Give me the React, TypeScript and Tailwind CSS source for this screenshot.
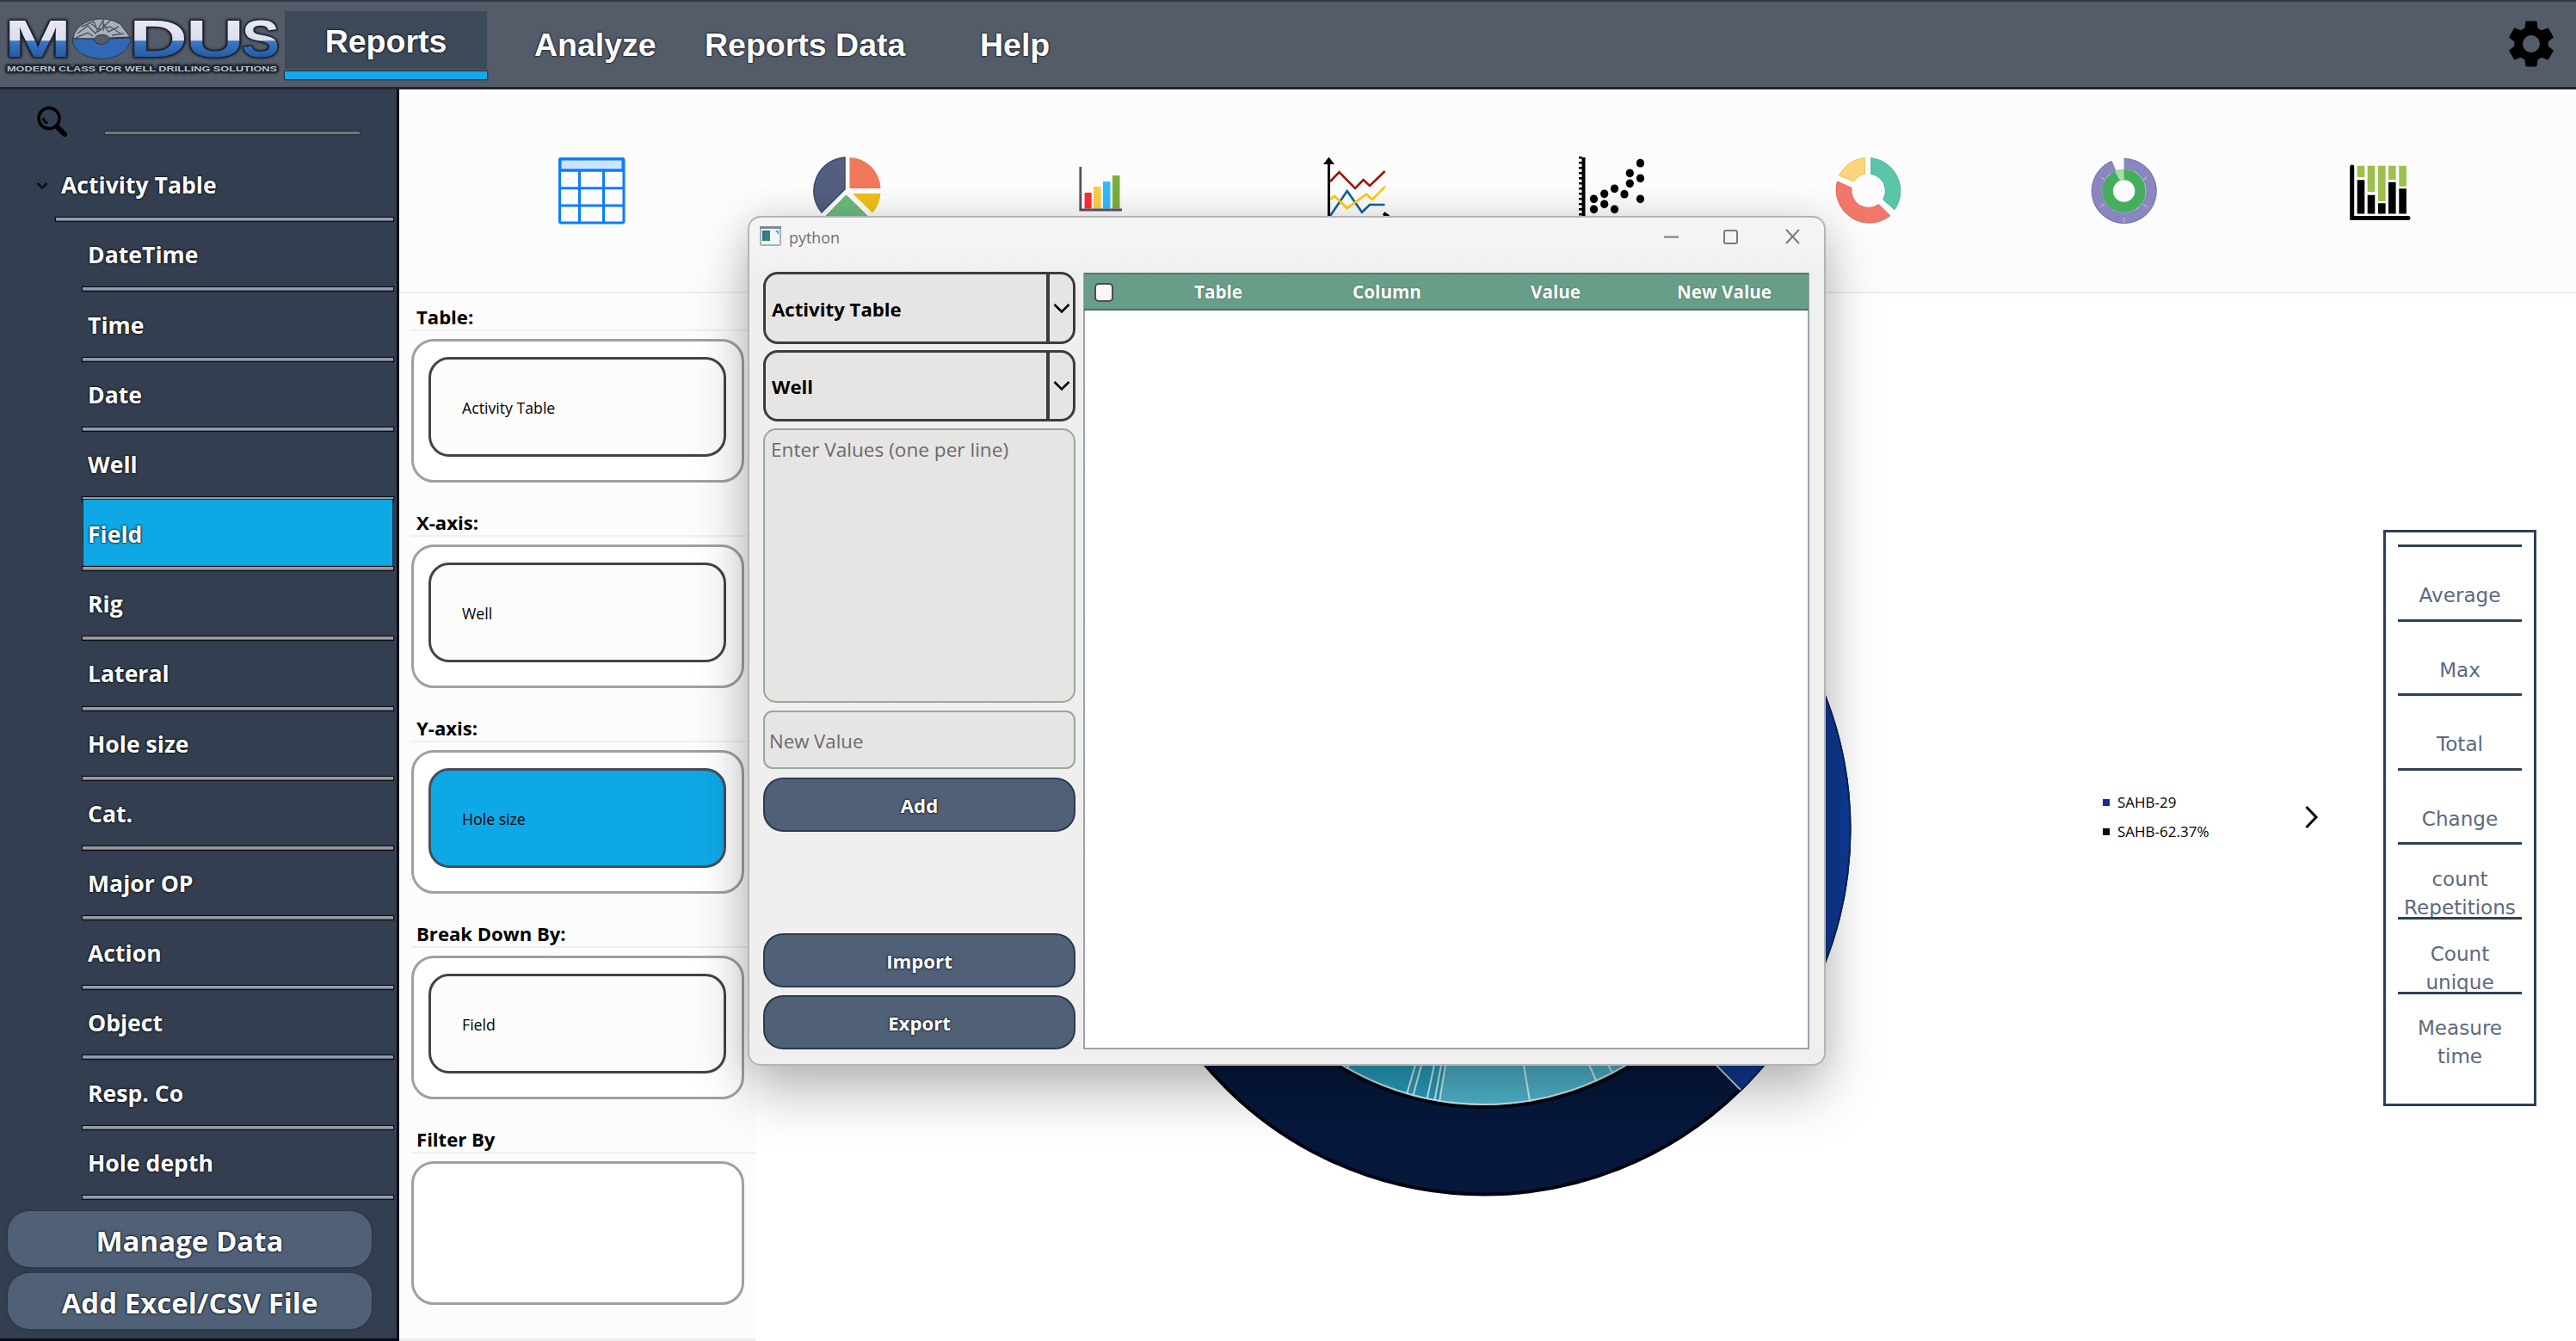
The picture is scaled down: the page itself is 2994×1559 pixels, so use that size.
import { MdSettings } from "react-icons/md";

const FIELDS = [
  "DateTime", "Time", "Date", "Well", "Field", "Rig", "Lateral", "Hole size",
  "Cat.", "Major OP", "Action", "Object", "Resp. Co", "Hole depth",
];

const SLOTS = [
  { label: "Table:", value: "Activity Table" },
  { label: "X-axis:", value: "Well" },
  { label: "Y-axis:", value: "Hole size", active: true },
  { label: "Break Down By:", value: "Field" },
  { label: "Filter By" },
];

const STATS = ["Average", "Max", "Total", "Change", "count Repetitions", "Count unique", "Measure time"];

function Logo() {
  const letter = {
    fontFamily: "Liberation Sans, sans-serif",
    fontWeight: 700,
    fontSize: 61,
    fill: "url(#wave)",
    stroke: "#2c3540",
    strokeWidth: 1.5,
    paintOrder: "stroke",
    lengthAdjust: "spacingAndGlyphs" as const,
    y: 64,
  };
  return (
    <svg width="331" height="99" viewBox="0 0 331 99" className="shrink-0">
      <defs>
        <linearGradient id="wave" gradientUnits="userSpaceOnUse" x1="0" y1="20" x2="0" y2="66">
          <stop offset="0" stopColor="#e9e9f6" />
          <stop offset="0.54" stopColor="#dcdcee" />
          <stop offset="0.56" stopColor="#3b78c4" />
          <stop offset="1" stopColor="#2457a0" />
        </linearGradient>
      </defs>
      <text {...letter} x="5" textLength="78">M</text>
      <text {...letter} x="150" textLength="68">D</text>
      <text {...letter} x="216" textLength="68">U</text>
      <text {...letter} x="281" textLength="44">S</text>
      <path d="M85 43A33 24 0 0 1 140 26L151 41L127 42A9 6 0 0 0 110 43Z" fill="#a9b0ba" stroke="#2c3540" />
      <path
        d="M90 37l12-9 9 9 8-14 7 12 12-6M95 29l14-6 5 12 14-13M88 42l14-6 6 4M104 24l10 8 14-3 12 8M120 20v14M130 39l14-2"
        fill="none" stroke="#4e5866" strokeWidth="1.4"
      />
      <path d="M84 43H109A9 6.5 0 0 0 127 43L152 42A34 24 0 0 1 84 43Z" fill="#2f69b5" stroke="#2c3540" />
      <text
        x="8" y="81" textLength="314" lengthAdjust="spacingAndGlyphs" fontFamily="Liberation Sans, sans-serif"
        fontWeight="700" fontSize="9.5" fill="#bcc3d1" stroke="#2c3540" strokeWidth="2.5" paintOrder="stroke"
      >
        MODERN CLASS FOR WELL DRILLING SOLUTIONS
      </text>
    </svg>
  );
}

function TableIcon() {
  return (
    <svg width="80" height="80" fill="none" stroke="#0a7dff" strokeWidth="3">
      <path d="M3 3H76V16H3Z" fill="#cce4ff" />
      <rect x="2.5" y="2.5" width="74.5" height="74.5" rx="2" fill="none" />
      <path d="M2 16H77M2 36.7H77M2 57H77M25.5 16V77M53.5 16V77" />
    </svg>
  );
}

function PieIcon() {
  return (
    <svg width="80" height="80">
      <path d="M37 1V38L10 65A39 39 0 0 1 37 1Z" fill="#525f80" stroke="#3d4868" strokeWidth="1.5" />
      <path d="M42.5 1A37 37 0 0 1 78.5 37H42.5Z" fill="#f0785a" />
      <path d="M46 43H78.5A38 38 0 0 1 69 65.5Z" fill="#eec119" />
      <path d="M38.5 45L14 70A38 38 0 0 0 64 70Z" fill="#6cbb7e" stroke="#57a86b" />
    </svg>
  );
}

function BarsIcon() {
  return (
    <svg width="80" height="80" className="mr-[5px]">
      <path d="M21.6 42h8v18.500h-8z" fill="#fb2e36" />
      <path d="M32 35h8.500v25.500h-8.500z" fill="#ffcb45" />
      <path d="M43 29h8.500v31.500h-8.500z" fill="#30bdff" />
      <path d="M54 22h8.500v38.500h-8.500z" fill="#78ae39" />
      <path d="M16.800 12V62H65" fill="none" stroke="#575260" strokeWidth="2.800" />
    </svg>
  );
}

function LinesIcon() {
  return (
    <svg width="80" height="80" fill="none" strokeWidth="2.600" className="mr-[5px]">
      <path d="M10 69L29.700 40L47 64.700L56 56H73.500" stroke="#12609f" />
      <path d="M10 50L15 46L29.700 60L52 43.700L59 50L74 34.700" stroke="#ffc90a" />
      <path d="M10 29L20.500 18L39 37L48.600 27L56 34L73.600 17" stroke="#9c160c" />
      <path d="M8.500 6V70" stroke="#000" strokeWidth="3" />
      <path d="M8.500 0.500L15 9H2Z" fill="#000" />
      <path d="M72 66L78 70" stroke="#000" strokeWidth="4" />
    </svg>
  );
}

const DOTS = [
  [18.5, 49.3], [18.5, 61.3], [30.7, 43.3], [30.7, 55.3], [42.5, 37.3], [42.5, 61.3],
  [54, 43.7], [60.3, 19.3], [60.3, 31.3], [72.5, 7.7], [72.5, 25.3], [72.5, 49.3],
];

function ScatterIcon() {
  return (
    <svg width="80" height="80" className="mr-[3px]">
      <path d="M6.500 1V70" stroke="#000" strokeWidth="4" />
      <path d="M3 0V70" stroke="#000" strokeWidth="4" strokeDasharray="2.500 3.500" />
      {DOTS.map(([x, y]) => <ellipse key={`${x}-${y}`} cx={x} cy={y} rx="4.600" ry="4.900" />)}
    </svg>
  );
}

function DonutIcon() {
  return (
    <svg width="80" height="80" className="mr-[3px]">
      <path d="M43.700 1.700A38.500 38.500 0 0 1 71 61.700L57.700 50A20 20 0 0 0 43.700 20.300Z" fill="#5ac6a9" stroke="#45b396" />
      <path d="M65.700 68.700A38.500 38.500 0 0 1 4.400 29L21 36.300A20 20 0 0 0 52.400 55.700Z" fill="#f2776b" stroke="#e2655a" />
      <path d="M36.400 1.300V20A20 20 0 0 0 23.700 29L6.400 22A38 38 0 0 1 36.400 1.300Z" fill="#fbd57e" stroke="#efc25f" />
    </svg>
  );
}

function RingsIcon() {
  return (
    <svg width="80" height="80" fill="none" className="mr-[2px]">
      <path d="M39.600 8.500A31.500 31.500 0 1 1 28 10.800" stroke="#8986c0" strokeWidth="12.500" />
      <path d="M39.600 2.500A37.500 37.500 0 1 1 25 5.500" stroke="#706cae" strokeWidth="1" />
      <path d="M66 24L61 28M13 24L18 28M67 59L62 55M12 59L17 55M39.600 71V77" stroke="#b3b1da" strokeWidth="1.500" />
      <circle cx="39.600" cy="40" r="19" stroke="#45ae5c" strokeWidth="12.500" />
      <path d="M39.600 27V14.500A25.500 25.500 0 0 0 29 17.200L35 28Z" fill="#a9dca6" />
    </svg>
  );
}

function StackedIcon() {
  return (
    <svg width="80" height="80" className="mr-[2px]">
      <path d="M7.700 12V71.500H73" fill="none" stroke="#000" strokeWidth="5" strokeLinecap="round" />
      <path d="M13.700 10.700h8.600V24h-8.600zM25.700 10.700h8.600V41h-8.600zM38 10.700h8.600V52H38zM50 10.700h8.600V27H50zM62.300 10.700h8.600V34.700h-8.600z" fill="#9dbf4b" />
      <path d="M13.700 27.300h8.600V66.500h-8.600zM25.700 44.700h8.600V66.500h-8.600zM38 54.300h8.600V66.500H38zM50 29.700h8.600V66.500H50zM62.300 37.300h8.600V66.500h-8.600z" />
    </svg>
  );
}

function Header() {
  return (
    <header className="flex h-[104px] shrink-0 border-t-2 border-b-[3px] border-t-[#33383f] border-b-[#1e2530] bg-[#545c6a] font-['Liberation_Sans',sans-serif] text-[37.5px] font-bold text-white [text-shadow:0_0_3px_#10151d,0_0_2px_#10151d]">
      <Logo />
      <div className="flex w-[235px] shrink-0 flex-col pt-[11px]">
        <div className="flex h-[67px] items-center justify-center bg-[#3c4a5a] pt-[3px]">Reports</div>
        <div className="mt-[3px] h-[9px] rounded-[1px] bg-[#12aae8] shadow-[0_0_2px_1px_#1d2733]" />
      </div>
      <nav className="flex flex-1 items-center pt-[1px] pl-[55px]">
        <span className="w-[198px]">Analyze</span>
        <span className="w-[320px]">Reports Data</span>
        <span>Help</span>
      </nav>
      <MdSettings className="mt-[16px] mr-[19px] size-[66px] text-black" />
    </header>
  );
}

function Rule() {
  return <div className="h-[4px] border-b border-[#566b8c] bg-[#9b9b9c] shadow-[0_0_1px_1px_#0b111a]" />;
}

function Sidebar() {
  return (
    <aside className="flex w-[464px] shrink-0 flex-col border-r-[3px] border-b-[3px] border-[#050b16] bg-[#333f50] font-['Open_Sans',sans-serif] font-bold text-white [text-shadow:0_0_3px_#05090f,0_0_2px_#05090f]">
      <div className="flex h-[72px] shrink-0 pl-[42px]">
        <svg width="40" height="40" className="mt-[18px]" fill="none" stroke="#000" strokeLinecap="round">
          <circle cx="15" cy="15.500" r="12" strokeWidth="3.500" />
          <path d="M8.500 16a7 7 0 0 0 4 5" strokeWidth="2.500" />
          <path d="M24 25L33 34" strokeWidth="6" />
        </svg>
        <div className="mt-[49px] ml-[40px] h-[3px] w-[296px] bg-[#77746f] shadow-[0_0_2px_1px_#222d3c]" />
      </div>
      <div className="flex h-[81.2px] shrink-0 flex-col pr-[4px] pl-[65px] text-[26.6px]">
        <div className="relative flex flex-1 items-center pt-[3px] pl-[6px]">
          <svg width="14" height="10" className="absolute left-[-23px]" fill="none" stroke="#0a0f16" strokeWidth="2.500">
            <path d="M1.500 2L7 7.500L12.500 2" />
          </svg>
          Activity Table
        </div>
        <Rule />
      </div>
      {FIELDS.map((f) => (
        <div key={f} className="flex h-[81.2px] shrink-0 flex-col pr-[4px] pl-[96px] text-[26.6px]">
          <div className={f === "Field" ? "-mt-[2px] flex flex-1 items-center border border-[#13364f] bg-[#0fa8e6] pt-[4px] pl-[5px]" : "flex flex-1 items-center pt-[3px] pl-[6px]"}>
            {f}
          </div>
          <Rule />
        </div>
      ))}
      <div className="mt-[14.500px] flex flex-col gap-[7px] pl-[9px] text-[33px]">
        {["Manage Data", "Add Excel/CSV File"].map((t) => (
          <div key={t} className="flex h-[65px] w-[423px] items-center justify-center rounded-[25px] bg-[#506077] pt-[4px] shadow-[0_0_3px_1px_#2a3647]">
            {t}
          </div>
        ))}
      </div>
    </aside>
  );
}

function Toolbar() {
  return (
    <div className="grid h-[237px] shrink-0 grid-cols-[repeat(8,297px)] items-center justify-items-center border-b-[2px] border-[#e9eeee] bg-[#fcfcfc] pl-[75px]">
      <TableIcon />
      <PieIcon />
      <BarsIcon />
      <LinesIcon />
      <ScatterIcon />
      <DonutIcon />
      <RingsIcon />
      <StackedIcon />
    </div>
  );
}

function AxisPanel() {
  return (
    <section className="flex w-[414px] shrink-0 flex-col border-b-[3px] border-[#eeeeee] bg-[#fcfcfc] pl-[14px] font-['Open_Sans',sans-serif] text-black">
      {SLOTS.map((s) => (
        <div key={s.label} className="h-[239px] shrink-0">
          <div className="flex h-[44px] items-end border-b-[2px] border-[#edf0f0] pb-[2px] pl-[6px] text-[22.100px] leading-[26px] font-bold">
            {s.label}
          </div>
          <div className="mt-[9px] h-[167px] w-[387px] rounded-[26px] border-[3px] border-[#a0a0a0] bg-white pt-[18px] pl-[17px]">
            {s.value && (
              <div className={s.active
                ? "flex h-[116px] w-[346px] items-center rounded-[24px] border-[3px] border-[#454f5a] bg-[#0fa8e6] pt-[2px] pl-[36px] text-[17.7px]"
                : "flex h-[116px] w-[346px] items-center rounded-[24px] border-[3px] border-[#444444] bg-[#fcfdfb] pt-[2px] pl-[36px] text-[17.7px]"}>
                {s.value}
              </div>
            )}
          </div>
        </div>
      ))}
    </section>
  );
}

const SPOKES = [-157, -80, -73, -58, -50, -45, 46, 122, 144];

function Sunburst() {
  const point = (dx: number) => {
    const k = 321 / Math.hypot(dx, 274);
    return `${430 + dx * k} ${430 + 274 * k}`;
  };
  return (
    <svg width="860" height="860" className="mt-[193px] ml-[417px] shrink-0">
      <circle cx="430" cy="430" r="424.500" fill="#06193c" stroke="#00040f" strokeWidth="4" />
      <path d="M430 430L729 733A426 426 0 0 0 430 4Z" fill="#103a94" stroke="#0a2560" strokeWidth="2" />
      <path d="M430 430L728 733" stroke="#c3ccdc" strokeWidth="2" />
      <circle cx="430" cy="430" r="323" fill="#4fb5cd" stroke="#00040f" strokeWidth="4" />
      <path d={`M430 430L${point(-45)}A321 321 0 0 1 109 430Z`} fill="#27a1bf" />
      <circle cx="430" cy="430" r="320" fill="none" stroke="#cfe3ea" strokeWidth="2" />
      {SPOKES.map((dx) => (
        <path key={dx} d={`M430 430L${point(dx)}`} stroke="#dbeef3" strokeWidth="2" />
      ))}
    </svg>
  );
}

function ChartArea() {
  return (
    <section className="flex flex-1 items-start bg-white">
      <Sunburst />
      <div className="mt-[575px] ml-[289px] flex w-[235px] shrink-0 flex-col font-['Open_Sans',sans-serif] text-[17px] leading-[34px] text-black">
        <div className="flex items-center gap-[9px]"><i className="size-[8px] bg-[#0c2f96]" />SAHB-29</div>
        <div className="flex items-center gap-[9px]"><i className="size-[8px] bg-[#020818]" />SAHB-62.37%</div>
      </div>
      <svg width="16" height="28" className="mt-[595px] shrink-0" fill="none" stroke="#000" strokeWidth="3">
        <path d="M1.500 2L13 14L1.500 26" />
      </svg>
      <div className="mt-[275px] ml-[75px] h-[670px] w-[178px] shrink-0 border-[3px] border-[#2f3f55] bg-white px-[14px] pt-[14px] font-['DejaVu_Sans',sans-serif] text-[23.1px] leading-[33px] text-[#5b6a80]">
        <div className="h-[3px] bg-[#2f3f55]" />
        {STATS.map((s) => (
          <div key={s} className="flex h-[86.600px] items-center justify-center overflow-hidden border-b-[3px] border-[#2f3f55] pt-[30px] text-center last:border-transparent">
            {s}
          </div>
        ))}
      </div>
    </section>
  );
}

function Combo({ value }: { value: string }) {
  return (
    <div className="flex h-[83.500px] shrink-0 rounded-[17px] border-[3.500px] border-[#3c3c3c] bg-[#e6e5e3] text-[22.200px] font-bold text-black">
      <div className="flex w-[326px] items-center pt-[3px] pl-[7px]">{value}</div>
      <div className="flex flex-1 items-center justify-center border-l-[4px] border-[#3c3c3c] pt-[1px]">
        <svg width="20" height="13" fill="none" stroke="#000" strokeWidth="2.500">
          <path d="M1.500 2L10 10.500L18.500 2" />
        </svg>
      </div>
    </div>
  );
}

function DialogButton({ label }: { label: string }) {
  return (
    <div className="flex h-[63px] shrink-0 items-center justify-center rounded-[23px] border-[2px] border-[#2a3a50] bg-[#506077] pt-[2px] text-[22.200px] font-bold text-white [text-shadow:0_0_3px_#10151d,0_0_2px_#10151d]">
      {label}
    </div>
  );
}

function Dialog() {
  return (
    <div className="absolute top-[251px] left-[869px] flex h-[988px] w-[1253px] flex-col rounded-[15px] border-[2px] border-[#b4b4b4] bg-[#efefef] bg-linear-to-b from-[#f4f4f4] from-3% to-[#efefef] to-7% font-['Open_Sans',sans-serif] shadow-[0_32px_64px_rgba(0,0,0,0.26),0_0_40px_rgba(0,0,0,0.10)]">
      <div className="flex h-[63px] shrink-0 pl-[12px]">
        <svg width="25" height="24" className="mt-[10px]">
          <rect x="1" y="1" width="23" height="21" rx="1.500" fill="#f3f6f8" stroke="#a7b0b8" strokeWidth="2" />
          <path d="M0 1.500H25" stroke="#7f8994" strokeWidth="3" />
          <path d="M3 5H12V17H3Z" fill="#2f6f9a" />
          <path d="M7 6H12V17H5Z" fill="#2f8a62" />
          <path d="M18 5h4v5z" fill="#5d9fc4" />
        </svg>
        <span className="mt-[10px] ml-[9px] text-[17.900px] leading-[26px] text-[#707070]">python</span>
        <svg width="160" height="24" className="mt-[11px] mr-[27px] ml-auto" fill="none" stroke="#7a7a7a" strokeWidth="2">
          <path d="M1 11.500H18" />
          <rect x="71" y="4" width="15" height="15" rx="2" />
          <path d="M143 3L158 19M158 3L143 19" />
        </svg>
      </div>
      <div className="flex flex-1 gap-[9px] pb-[17px] pl-[16px]">
        <div className="flex w-[363px] flex-col">
          <Combo value="Activity Table" />
          <div className="h-[7px]" />
          <Combo value="Well" />
          <div className="mt-[8px] h-[319px] shrink-0 rounded-[15px] border-[2.500px] border-[#94a99b] bg-[#e6e5e3] pt-[9px] pl-[7px] text-[22.600px] leading-[28px] text-[#6a6a6a]">
            Enter Values (one per line)
          </div>
          <div className="mt-[9px] flex h-[68px] shrink-0 items-center rounded-[11px] border-[2px] border-[#94a99b] bg-[#e6e5e3] pt-[3px] pl-[5px] text-[22.200px] text-[#6a6a6a]">
            New Value
          </div>
          <div className="h-[10px]" />
          <DialogButton label="Add" />
          <div className="mt-auto" />
          <DialogButton label="Import" />
          <div className="h-[9px]" />
          <DialogButton label="Export" />
        </div>
        <div className="mt-[1px] w-[844px] border-[2px] border-[#9aa1ab] bg-white">
          <div className="-mx-[1px] -mt-[2px] flex h-[44px] items-center border-t-[2px] border-b-[2px] border-t-[#56786f] border-b-[#47705f] bg-[#689d87] pt-[2px] text-[20.700px] font-bold text-white [text-shadow:0_0_2px_#3d6b58]">
            <div className="flex w-[58px] items-center pl-[12px]">
              <i className="h-[22px] w-[22px] rounded-[5px] border-[2px] border-[#4c4c4c] bg-[#f8f8f8]" />
            </div>
            {["Table", "Column", "Value", "New Value"].map((c) => (
              <div key={c} className="w-[196px] text-center">{c}</div>
            ))}
          </div>
        </div>
      </div>
    </div>
  );
}

export default function App() {
  return (
    <div className="relative flex h-[1559px] w-[2994px] flex-col overflow-hidden bg-white">
      <Header />
      <div className="flex min-h-0 flex-1">
        <Sidebar />
        <div className="flex min-w-0 flex-1 flex-col">
          <Toolbar />
          <div className="flex min-h-0 flex-1">
            <AxisPanel />
            <ChartArea />
          </div>
        </div>
      </div>
      <Dialog />
    </div>
  );
}
